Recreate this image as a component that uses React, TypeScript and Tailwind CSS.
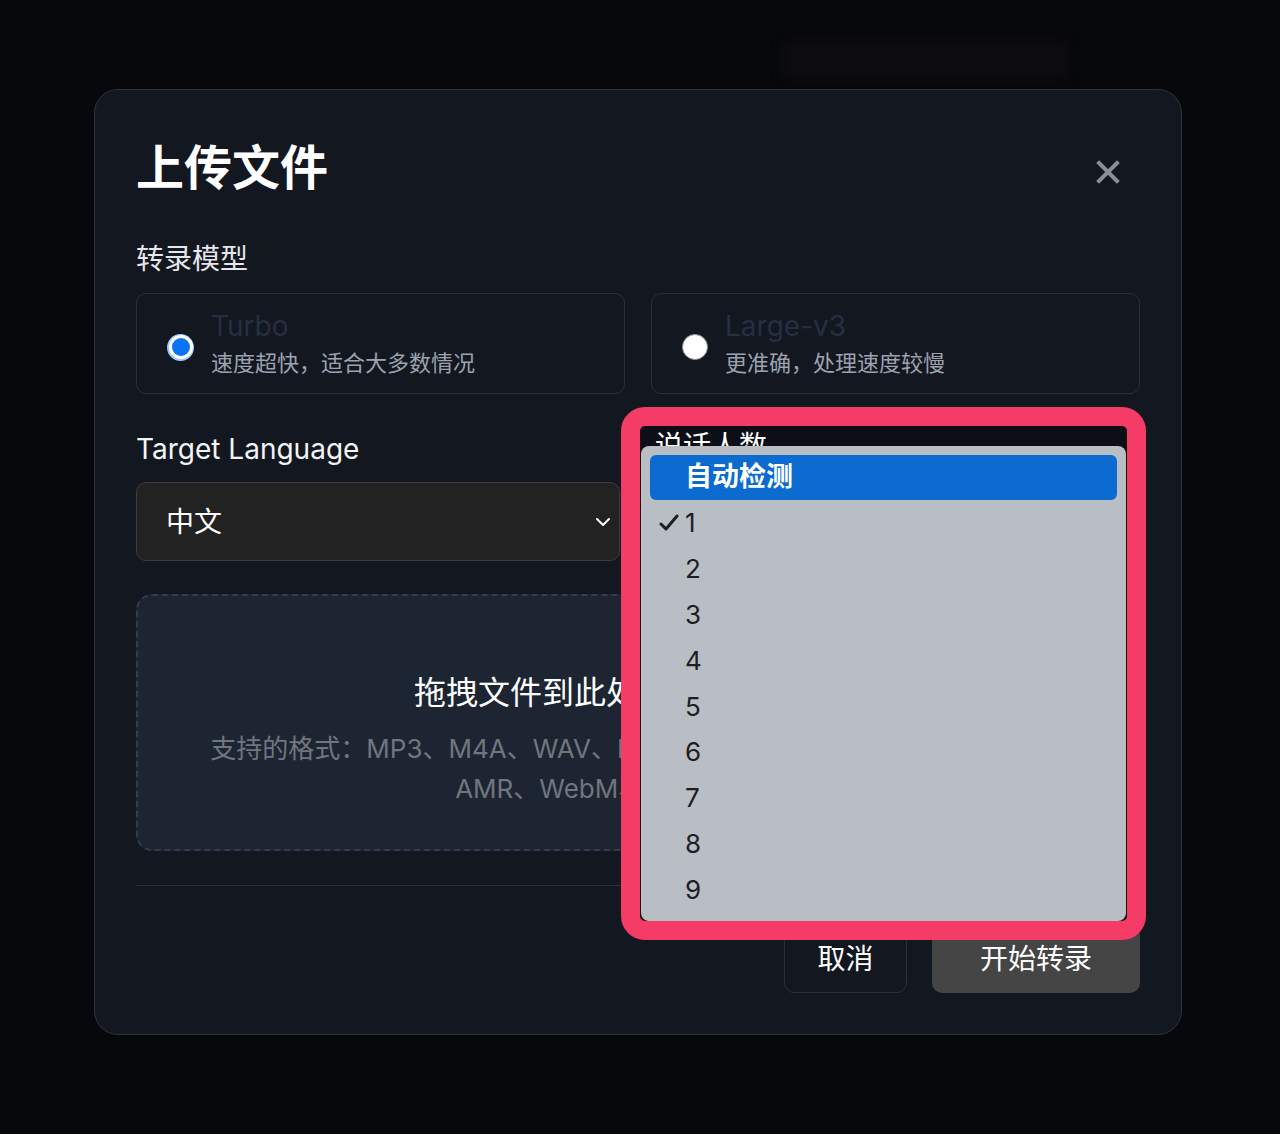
import { ChevronDown } from 'lucide-react';

const counts = ['1', '2', '3', '4', '5', '6', '7', '8', '9'];

function Radio({ checked }: { checked: boolean }) {
  if (checked) {
    return (
      <span className="mt-[7px] flex h-[27px] w-[27px] shrink-0 items-center justify-center rounded-full bg-[#9cc6ff]">
        <span className="flex h-[24px] w-[24px] items-center justify-center rounded-full bg-white">
          <span className="h-[18px] w-[18px] rounded-full bg-[#0b74f5]" />
        </span>
      </span>
    );
  }
  return <span className="mt-[7px] h-[26px] w-[26px] shrink-0 rounded-full border border-[#8b8f96] bg-white" />;
}

function ModelCard({ title, desc, checked }: { title: string; desc: string; checked: boolean }) {
  return (
    <div className="flex h-[101px] items-center gap-[17px] rounded-[10px] border-[1.5px] border-[#2a2f3a] pl-[30px]">
      <Radio checked={checked} />
      <div className="flex flex-col">
        <span className="text-[28px] leading-[34px] text-[#243042]">{title}</span>
        <span className="mt-[5px] text-[22px] leading-[30px] text-[#9ca3af]">{desc}</span>
      </div>
    </div>
  );
}

export default function App() {
  return (
    <div className="min-h-[1134px] w-[1280px] overflow-hidden bg-[#06080b] pt-[40px] font-['Inter','Noto_Sans_CJK_SC',sans-serif] text-white">
      {/* page behind the dialog, blurred out */}
      <div className="ml-[780px] h-[40px] w-[290px] rounded-md bg-[#0c0b0d] blur-[4px]" />

      <div className="relative ml-[94px] mt-[9px] flex h-[946px] w-[1088px] flex-col rounded-[24px] border border-[#2d323c] bg-[#131720] px-[41px] pb-[41px] pt-[41px]">
        {/* Header */}
        <div className="flex items-center justify-between">
          <h2 className="text-[48px] font-semibold leading-[74px] text-white">上传文件</h2>
          <button className="mr-[12px] mt-[8px] flex h-[40px] w-[40px] items-center justify-center">
            <svg width="24" height="24" viewBox="0 0 24 24" fill="none" stroke="#8b8e94" strokeWidth="4" strokeLinecap="square">
              <path d="M3 3 21 21M21 3 3 21" />
            </svg>
          </button>
        </div>

        <div className="mt-[36px] text-[28px] leading-[36px] text-[#e5e7eb]">转录模型</div>
        <div className="mt-[16px] grid grid-cols-2 gap-[26px]">
          <ModelCard title="Turbo" desc="速度超快，适合大多数情况" checked />
          <ModelCard title="Large-v3" desc="更准确，处理速度较慢" checked={false} />
        </div>

        <div className="mt-[37px] grid grid-cols-[484px_485px] gap-[35px]">
          <div className="flex flex-col">
            <span className="text-[28px] leading-[36px] text-[#f3f4f6]">Target Language</span>
            <div className="mt-[15px] flex h-[79px] items-center justify-between rounded-[10px] border-[1.5px] border-[#3d3d3f] bg-[#222222] pl-[29px] pr-[4px]">
              <span className="text-[28px] text-white">中文</span>
              <ChevronDown size={24} strokeWidth={2} className="text-white" />
            </div>
          </div>
          <div className="flex flex-col">
            <span className="text-[28px] leading-[36px] text-[#f3f4f6]">说话人数</span>
            <div className="mt-[15px] flex h-[79px] items-center justify-between rounded-[10px] border-[1.5px] border-[#3d3d3f] bg-[#222222] pl-[29px] pr-[4px]">
              <span className="text-[28px] text-white">1</span>
              <ChevronDown size={24} strokeWidth={2} className="text-white" />
            </div>
          </div>
        </div>

        {/* Drop zone */}
        <div className="mt-[33px] flex h-[257px] flex-col items-center rounded-[16px] border-2 border-dashed border-[#343d4b] bg-[#1d2532] pt-[76px]">
          <span className="text-[32px] leading-[42px] text-white">拖拽文件到此处或点击选择文件</span>
          <span className="mt-[15px] whitespace-nowrap text-[26px] leading-[40px] text-[#71767e]">支持的格式：MP3、M4A、WAV、FLAC、OGG、AAC、WMA、OPUS、</span>
          <span className="whitespace-nowrap text-[26px] leading-[40px] text-[#71767e]">AMR、WebM、MP4、MOV 等</span>
        </div>

        <div className="mt-[34px] h-px bg-[#2b303b]" />

        <div className="mt-[39px] flex justify-end gap-[25px]">
          <button className="h-[68px] w-[123px] rounded-[10px] border-[1.5px] border-[#2a2f3a] text-[28px] text-white">取消</button>
          <button className="h-[68px] w-[208px] rounded-[10px] bg-[#454545] text-[28px] text-white">开始转录</button>
        </div>

        {/* Open speaker-count menu, outlined */}
        <div className="absolute left-[526px] top-[317px] flex h-[533px] w-[525px] flex-col rounded-[24px] border-[19px] border-[#f53c66] bg-[#0c0f15]">
          <div className="h-[20px] overflow-hidden pl-[15px]">
            <span className="block pt-[2px] text-[28px] leading-[36px] text-white">说话人数</span>
          </div>
          <div className="mx-px flex flex-1 flex-col rounded-[8px] bg-[#b9bdc4] px-[9px] pt-[9px]">
            <div className="flex h-[45px] items-center rounded-[6px] bg-[#0b6bd0] pl-[35px] text-[27px] font-semibold text-white">
              自动检测
            </div>
            {counts.map((n) => (
              <div key={n} className="flex h-[45.8px] items-center text-[26px] text-[#1c1e22]">
                <span className="flex w-[35px] justify-center pl-[2px]">
                  {n === '1' && (
                    <svg width="20" height="18" viewBox="0 0 20 18" fill="none" stroke="#1c1e22" strokeWidth="3" strokeLinecap="round" strokeLinejoin="round">
                      <path d="M2 10 7 15 18 2" />
                    </svg>
                  )}
                </span>
                <span>{n}</span>
              </div>
            ))}
          </div>
        </div>
      </div>
    </div>
  );
}
